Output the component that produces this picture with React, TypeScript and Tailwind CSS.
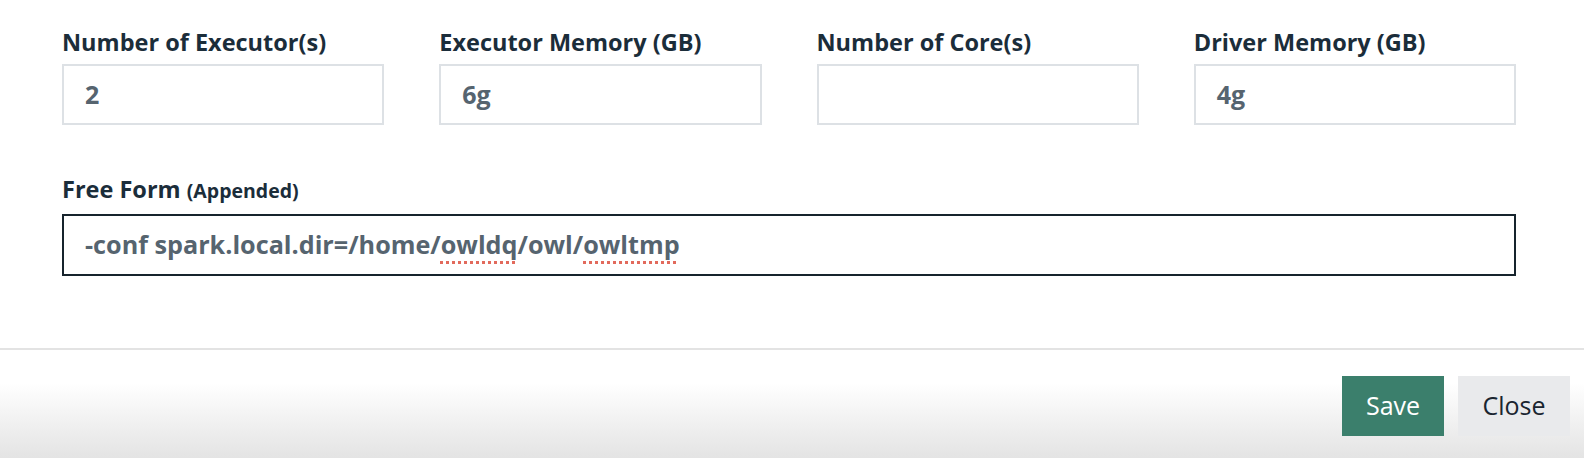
const FIELDS = [
  { label: 'Number of Executor(s)', value: '2' },
  { label: 'Executor Memory (GB)', value: '6g' },
  { label: 'Number of Core(s)', value: '' },
  { label: 'Driver Memory (GB)', value: '4g' },
];

const spellClass =
  'underline decoration-dotted decoration-[#e26a5c] decoration-[3px] underline-offset-[7px]';

export default function App() {
  return (
    <div className="h-[458px] w-[1584px] overflow-hidden bg-white font-['Open_Sans',sans-serif]">
      <div className="pb-[72px] pl-[62px] pr-[68px] pt-[26px]">
        <div className="grid grid-cols-4 gap-x-[55px]">
          {FIELDS.map((field) => (
            <Field key={field.label} label={field.label}>
              <div className="mt-[6px] flex h-[61px] items-center border-2 border-[#dde1e5] bg-white px-[21px] text-[25px] font-bold text-[#56646f]">
                {field.value}
              </div>
            </Field>
          ))}
        </div>

        <div className="mt-[48px]">
          <label className="block text-[23.5px] font-bold leading-[32px] text-[#1b2d3a]">
            Free Form <span className="text-[19.5px]">(Appended)</span>
          </label>
          <div className="mt-[7px] flex h-[62px] items-center border-2 border-[#17242d] bg-white px-[21px] text-[25.2px] font-bold text-[#56646f]">
            <span>
              -conf spark.local.dir=/home/<span className={spellClass}>owldq</span>/owl/
              <span className={spellClass}>owltmp</span>
            </span>
          </div>
        </div>
      </div>

      <div className="h-[2px] bg-[#e3e3e3]" />

      <div className="flex h-[110px] justify-end gap-[14px] bg-linear-to-b from-white from-[30%] to-[#e3e3e3] pr-[14px] pt-[26px]">
        <button
          type="button"
          className="h-[60px] w-[102px] bg-[#3b7f6c] text-[25px] text-white"
        >
          Save
        </button>
        <button
          type="button"
          className="h-[60px] w-[112px] bg-[#e9eaec] text-[25px] text-[#1a2530]"
        >
          Close
        </button>
      </div>
    </div>
  );
}

function Field({ label, children }: { label: string; children: React.ReactNode }) {
  return (
    <div>
      <label className="block text-[23.5px] font-bold leading-[32px] text-[#1b2d3a]">
        {label}
      </label>
      {children}
    </div>
  );
}
